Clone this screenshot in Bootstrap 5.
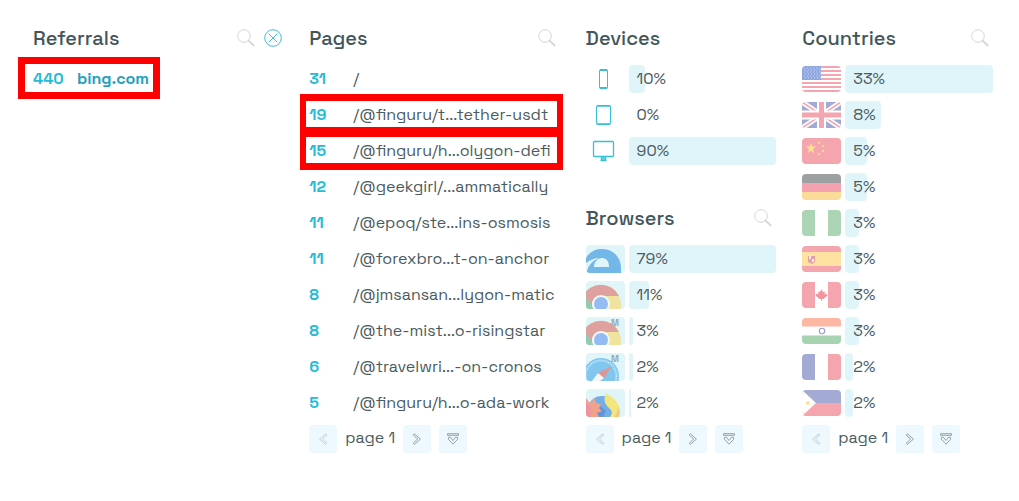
<!DOCTYPE html>
<html lang="en">
<head>
<meta charset="utf-8">
<meta name="viewport" content="width=device-width, initial-scale=1">
<title>Traffic overview</title>
<link href="https://cdn.jsdelivr.net/npm/bootstrap@5.3.0/dist/css/bootstrap.min.css" rel="stylesheet">
<style>
  body { font-family: "Space Grotesk", Inter, sans-serif; font-size: 16px; line-height: 28px; color: #4a5b60; background: #fff; }
  .stats { display: grid; grid-template-columns: 21fr 21fr 16fr 16fr; column-gap: 26px; padding: 17px 26px 32px 33px; }
  .panel-head { height: 40px; padding-right: 4px; padding-top: 2px; }
  .panel-head h2 { font-size: 20px; font-weight: 500; line-height: 38px; color: #42565a; }
  .panel-next { margin-top: 32px; }
  .tool { border: 0; background: none; padding: 0; line-height: 0; color: #d6d6d6; }
  .tool-clear { color: #3fc0da; }
  .count { width: 36px; font-weight: 700; color: #26bbd7; }
  .stat-link { color: #4a5b60; text-decoration: none; white-space: nowrap; }
  .stat-link-on { color: #1fa2ba; font-weight: 700; }
  .marked { position: relative; }
  .marked::after { content: ""; position: absolute; top: -7px; bottom: -5px; left: -9px; width: 263px; border: 7px solid #f00; border-width: 7px 6px; pointer-events: none; }
  .marked-short::after { top: -8px; bottom: -6px; left: -15px; width: 142px; border-width: 7px; }
  .pic { width: 39px; height: 28px; flex: none; }
  .tile { background: #e0f5f9; border-radius: 4px; overflow: hidden; }
  .flag { height: 26px; border-radius: 4px; margin: 1px 0; }
  .track { position: relative; height: 28px; }
  .fill { height: 28px; background: #e0f5f9; border-radius: 4px; }
  .track span { position: absolute; left: 8px; top: 0; }
  .pager button { width: 28px; height: 28px; border: 0; border-radius: 3px; padding: 0; background: #eef9ff; line-height: 0; color: #7c8b92; }
  .pager button:disabled { color: #b9c3c8; }
  .pager span { line-height: 26px; }
  svg { display: block; }
  @media (max-width: 800px) { .stats { grid-template-columns: 1fr 1fr; row-gap: 32px; } }
</style>
</head>
<body>
<svg width="0" height="0" class="position-absolute" aria-hidden="true">
  <symbol id="search" viewBox="0 0 18 18"><circle cx="7" cy="7" r="6.3" fill="none" stroke="currentColor"/><path d="M11.6 11.6l5 4.8" stroke="currentColor" stroke-width="2" stroke-linecap="round"/></symbol>
  <symbol id="prev" viewBox="0 0 28 28"><path d="M16.6 8.8l1.2 1.3-4.5 4 4.5 4-1.2 1.3-6-5.3z" fill="none" stroke="currentColor" stroke-width=".8"/></symbol>
  <symbol id="next" viewBox="0 0 28 28"><path d="M11.4 8.8l-1.2 1.3 4.5 4-4.5 4 1.2 1.3 6-5.3z" fill="none" stroke="currentColor" stroke-width=".8"/></symbol>
  <symbol id="more" viewBox="0 0 28 28"><path d="M8.5 8.700h11v1.600h-11zM9.400 12.300l1.800-.3 2.800 3.500 2.800-3.500 1.800.3v2L14 19.200l-4.600-4.900z" fill="none" stroke="currentColor" stroke-width=".8"/></symbol>
  <symbol id="chrome" viewBox="0 0 39 28"><circle cx="15" cy="24" r="20" fill="#f0e3a0"/><path d="M-3 15A20 20 0 0 1 33 15H15A9 9 0 0 0 7 28H0z" fill="#dfa19e"/><path d="M0 16l8 12H0z" fill="#8dcdb2"/><circle cx="15" cy="23" r="9" fill="#f1fafb"/><circle cx="15" cy="23" r="7" fill="#94bbf4"/></symbol>
</svg>

<main class="stats">
  <section>
    <div class="panel-head d-flex align-items-center justify-content-between pe-0">
      <h2 class="m-0">Referrals</h2>
      <div class="d-flex gap-2">
        <button class="tool" aria-label="Search referrals"><svg width="18" height="18"><use href="#search"/></svg></button>
        <button class="tool tool-clear" aria-label="Clear filter"><svg width="20" height="18" viewBox="0 0 20 18" fill="none" stroke="currentColor"><circle cx="10" cy="9" r="8.3"/><path d="M5.700 4.700l8.600 8.600M14.300 4.700l-8.600 8.600"/></svg></button>
      </div>
    </div>
    <ul class="list-unstyled mt-2 mb-0">
      <li class="d-flex gap-2 marked marked-short"><span class="count">440</span><a class="stat-link stat-link-on" href="#">bing.com</a></li>
    </ul>
  </section>

  <section>
    <div class="panel-head d-flex align-items-center justify-content-between">
      <h2 class="m-0">Pages</h2>
      <button class="tool" aria-label="Search pages"><svg width="18" height="18"><use href="#search"/></svg></button>
    </div>
    <ul class="list-unstyled d-grid gap-2 mt-2 mb-2">
      <li class="d-flex gap-2"><span class="count">31</span><a class="stat-link" href="#">/</a></li>
      <li class="d-flex gap-2 marked"><span class="count">19</span><a class="stat-link" href="#">/@finguru/t...tether-usdt</a></li>
      <li class="d-flex gap-2 marked"><span class="count">15</span><a class="stat-link" href="#">/@finguru/h...olygon-defi</a></li>
      <li class="d-flex gap-2"><span class="count">12</span><a class="stat-link" href="#">/@geekgirl/...ammatically</a></li>
      <li class="d-flex gap-2"><span class="count">11</span><a class="stat-link" href="#">/@epoq/ste...ins-osmosis</a></li>
      <li class="d-flex gap-2"><span class="count">11</span><a class="stat-link" href="#">/@forexbro...t-on-anchor</a></li>
      <li class="d-flex gap-2"><span class="count">8</span><a class="stat-link" href="#">/@jmsansan...lygon-matic</a></li>
      <li class="d-flex gap-2"><span class="count">8</span><a class="stat-link" href="#">/@the-mist...o-risingstar</a></li>
      <li class="d-flex gap-2"><span class="count">6</span><a class="stat-link" href="#">/@travelwri...-on-cronos</a></li>
      <li class="d-flex gap-2"><span class="count">5</span><a class="stat-link" href="#">/@finguru/h...o-ada-work</a></li>
    </ul>
    <nav class="pager d-flex gap-2" aria-label="Pages list">
      <button disabled aria-label="Previous"><svg width="28" height="28"><use href="#prev"/></svg></button><span>page 1</span>
      <button aria-label="Next"><svg width="28" height="28"><use href="#next"/></svg></button>
      <button aria-label="Show more"><svg width="28" height="28"><use href="#more"/></svg></button>
    </nav>
  </section>

  <section>
    <div class="panel-head d-flex align-items-center"><h2 class="m-0">Devices</h2></div>
    <ul class="list-unstyled d-grid gap-2 mt-2 mb-0">
      <li class="d-flex gap-1"><svg class="pic" viewBox="0 0 39 28" fill="none" stroke="#35bfd8"><rect x="13.5" y="4.5" width="8" height="19" rx="1"/><path d="M14 5h7M14 23h7" stroke-width="2"/></svg><div class="track flex-grow-1"><div class="fill" style="width:11%"></div><span>10%</span></div></li>
      <li class="d-flex gap-1"><svg class="pic" viewBox="0 0 39 28" fill="none" stroke="#35bfd8"><rect x="10.5" y="4.5" width="14" height="19" rx="1"/><path d="M11 23h13M11 5h13" stroke-width="1.6"/></svg><div class="track flex-grow-1"><span>0%</span></div></li>
      <li class="d-flex gap-1"><svg class="pic" viewBox="0 0 39 28" fill="none" stroke="#35bfd8"><rect x="7.5" y="4.5" width="20" height="15" rx="1" stroke-width="1.3"/><path d="M15.500 21h4v2h-4zM14.500 23.500h6" stroke-width="1.4"/></svg><div class="track flex-grow-1"><div class="fill" style="width:100%"></div><span>90%</span></div></li>
    </ul>

    <div class="panel-head panel-next d-flex align-items-center justify-content-between">
      <h2 class="m-0">Browsers</h2>
      <button class="tool" aria-label="Search browsers"><svg width="18" height="18"><use href="#search"/></svg></button>
    </div>
    <ul class="list-unstyled d-grid gap-2 mt-2 mb-2">
      <li class="d-flex gap-1"><svg class="pic tile" viewBox="0 0 39 28" role="img" aria-label="Edge"><path d="M0 13C4 6 10 4 16 4c12 0 19 9 19 19v5H1c0-2 0-3 1-5L0 20z" fill="#72b7e8"/><path d="M0 18C4 15 8 13 13 13 8 15 4 18 1 25L0 28z" fill="#e0f5f9"/><path d="M8 22c0-5 3-9 8-9s7 4 7 9z" fill="#e0f5f9"/></svg><div class="track flex-grow-1"><div class="fill" style="width:100%"></div><span>79%</span></div></li>
      <li class="d-flex gap-1"><svg class="pic tile" role="img" aria-label="Chrome"><use href="#chrome"/></svg><div class="track flex-grow-1"><div class="fill" style="width:13.5%"></div><span>11%</span></div></li>
      <li class="d-flex gap-1"><svg class="pic tile" role="img" aria-label="Chrome mobile"><use href="#chrome"/><text x="25" y="9" font-size="9" font-weight="700" fill="#9aa9ad">M</text></svg><div class="track flex-grow-1"><div class="fill" style="width:2.7%"></div><span>3%</span></div></li>
      <li class="d-flex gap-1"><svg class="pic tile" viewBox="0 0 39 28" role="img" aria-label="Safari mobile"><circle cx="15" cy="23" r="18" fill="#80c6ef"/><circle cx="15" cy="23" r="15.5" fill="none" stroke="#d3effa" stroke-width="2" stroke-dasharray="1 1"/><path d="M26 13L18 25l-6-5z" fill="#e2958f"/><path d="M12 20l6 5-4 3H6z" fill="#f4f5f5"/><text x="25" y="9" font-size="9" font-weight="700" fill="#9aa9ad">M</text></svg><div class="track flex-grow-1"><div class="fill" style="width:2.7%"></div><span>2%</span></div></li>
      <li class="d-flex gap-1"><svg class="pic tile" viewBox="0 0 39 28" role="img" aria-label="Firefox"><circle cx="16" cy="22" r="15" fill="#73aee6"/><path d="M9 19l5-2 6 5-3 6H9z" fill="#6294d7"/><path d="M0 9l4 5 5-5 1 5 5 1-2 4 3 3-5 2 2 4H0z" fill="#f2a18c"/><path d="M0 14l5 4-1 10H0z" fill="#ed93a3"/><path d="M21 4c2 3 6 4 9 8 5 6 4 11 3 16h-9c3-4 2-6-1-9-5-5-6-10-2-15z" fill="#f4e67e"/><path d="M28 28c3-3 4-6 3-11 4 5 3 8 2 11z" fill="#f4c985"/></svg><div class="track flex-grow-1"><div class="fill" style="width:1.4%"></div><span>2%</span></div></li>
    </ul>
    <nav class="pager d-flex gap-2" aria-label="Browsers list">
      <button disabled aria-label="Previous"><svg width="28" height="28"><use href="#prev"/></svg></button><span>page 1</span>
      <button aria-label="Next"><svg width="28" height="28"><use href="#next"/></svg></button>
      <button aria-label="Show more"><svg width="28" height="28"><use href="#more"/></svg></button>
    </nav>
  </section>

  <section>
    <div class="panel-head d-flex align-items-center justify-content-between">
      <h2 class="m-0">Countries</h2>
      <button class="tool" aria-label="Search countries"><svg width="18" height="18"><use href="#search"/></svg></button>
    </div>
    <ul class="list-unstyled d-grid gap-2 mt-2 mb-2">
      <li class="d-flex gap-1"><svg class="pic flag" viewBox="0 0 39 26" role="img" aria-label="United States"><path fill="#fff" d="M0 0h39v26H0z"/><path d="M0 1h39M0 5h39M0 9h39M0 13h39M0 17h39M0 21h39M0 25h39" stroke="#f4a6b0" stroke-width="2"/><path fill="#8fa9e0" d="M0 0h19v14H0z"/><path d="M2 2h16M3 4h16M2 6h16M3 8h16M2 10h16M3 12h16" stroke="#c3d2f1" stroke-dasharray="1 2"/></svg><div class="track flex-grow-1"><div class="fill" style="width:100%"></div><span>33%</span></div></li>
      <li class="d-flex gap-1"><svg class="pic flag" viewBox="0 0 39 26" role="img" aria-label="United Kingdom"><path fill="#a3abd5" d="M0 0h39v26H0z"/><path d="M0 0l39 26M39 0L0 26" stroke="#fff" stroke-width="5"/><path d="M0 0l39 26M39 0L0 26" stroke="#f4a6b0" stroke-width="1.6"/><path d="M19.500 0v26M0 13h39" stroke="#fff" stroke-width="9"/><path d="M19.500 0v26M0 13h39" stroke="#f4a6b0" stroke-width="5"/></svg><div class="track flex-grow-1"><div class="fill" style="width:24%"></div><span>8%</span></div></li>
      <li class="d-flex gap-1"><svg class="pic flag" viewBox="0 0 39 26" role="img" aria-label="China"><path fill="#f5a5ae" d="M0 0h39v26H0z"/><path d="M9 5l1.300 3.500H14L11 11l1 4-3-2.300L6 15l1-4-3-2.500h3.700z" fill="#fae08f"/><path d="M16 4h2v2h-2zM20 7h2v2h-2zM20 12h2v2h-2zM16 15h2v2h-2z" fill="#f9d695"/></svg><div class="track flex-grow-1"><div class="fill" style="width:15%"></div><span>5%</span></div></li>
      <li class="d-flex gap-1"><svg class="pic flag" viewBox="0 0 39 26" role="img" aria-label="Germany"><path fill="#9da1a4" d="M0 0h39v9H0z"/><path fill="#f5a2b0" d="M0 9h39v9H0z"/><path fill="#fadb9a" d="M0 18h39v8H0z"/></svg><div class="track flex-grow-1"><div class="fill" style="width:15%"></div><span>5%</span></div></li>
      <li class="d-flex gap-1"><svg class="pic flag" viewBox="0 0 39 26" role="img" aria-label="Nigeria"><path fill="#fff" d="M0 0h39v26H0z"/><path fill="#abd5b4" d="M0 0h13v26H0zM26 0h13v26H26z"/></svg><div class="track flex-grow-1"><div class="fill" style="width:9%"></div><span>3%</span></div></li>
      <li class="d-flex gap-1"><svg class="pic flag" viewBox="0 0 39 26" role="img" aria-label="Spain"><path fill="#f5a5ae" d="M0 0h39v26H0z"/><path fill="#fde2a1" d="M0 6h39v14H0z"/><path fill="#e9a0a4" d="M6 10h7v6l-3 2-4-2z"/><path fill="#f7f0ea" d="M7 9h2v4H7zM10 13h2v3h-2z"/></svg><div class="track flex-grow-1"><div class="fill" style="width:9%"></div><span>3%</span></div></li>
      <li class="d-flex gap-1"><svg class="pic flag" viewBox="0 0 39 26" role="img" aria-label="Canada"><path fill="#fff" d="M0 0h39v26H0z"/><path fill="#f5a5ae" d="M0 0h13v26H0zM26 0h13v26H26z"/><path fill="#f3949f" d="M19.500 7l1.500 3 2-.5-.5 3 2-1 1 2-4 3.500h-1.700v2h-.8v-2H17.500l-4-3.500 1-2 2 1-.5-3 2 .5z"/></svg><div class="track flex-grow-1"><div class="fill" style="width:9%"></div><span>3%</span></div></li>
      <li class="d-flex gap-1"><svg class="pic flag" viewBox="0 0 39 26" role="img" aria-label="India"><path fill="#fff" d="M0 0h39v26H0z"/><path fill="#fdb7a5" d="M0 0h39v8.500H0z"/><path fill="#a8d3b0" d="M0 17.500h39V26H0z"/><circle cx="20" cy="13" r="2.700" fill="none" stroke="#9a9fd2" stroke-width="1.100"/></svg><div class="track flex-grow-1"><div class="fill" style="width:9%"></div><span>3%</span></div></li>
      <li class="d-flex gap-1"><svg class="pic flag" viewBox="0 0 39 26" role="img" aria-label="France"><path fill="#fff" d="M0 0h39v26H0z"/><path fill="#a3abd5" d="M0 0h13v26H0z"/><path fill="#f5a5ae" d="M26 0h13v26H26z"/></svg><div class="track flex-grow-1"><div class="fill" style="width:5.4%"></div><span>2%</span></div></li>
      <li class="d-flex gap-1"><svg class="pic flag" viewBox="0 0 39 26" role="img" aria-label="Philippines"><path fill="#a3abd5" d="M0 0h39v13H0z"/><path fill="#f5a5ae" d="M0 13h39v13H0z"/><path fill="#fff" d="M0 0l14 13L0 26z"/><circle cx="6" cy="13" r="2" fill="#fae49a"/><path d="M1 3h1v1H1zM1 22h1v1H1zM11 13h1v1h-1z" fill="#fae49a"/></svg><div class="track flex-grow-1"><div class="fill" style="width:5.4%"></div><span>2%</span></div></li>
    </ul>
    <nav class="pager d-flex gap-2" aria-label="Countries list">
      <button disabled aria-label="Previous"><svg width="28" height="28"><use href="#prev"/></svg></button><span>page 1</span>
      <button aria-label="Next"><svg width="28" height="28"><use href="#next"/></svg></button>
      <button aria-label="Show more"><svg width="28" height="28"><use href="#more"/></svg></button>
    </nav>
  </section>
</main>
<script src="https://cdn.jsdelivr.net/npm/bootstrap@5.3.0/dist/js/bootstrap.bundle.min.js"></script>
</body>
</html>
